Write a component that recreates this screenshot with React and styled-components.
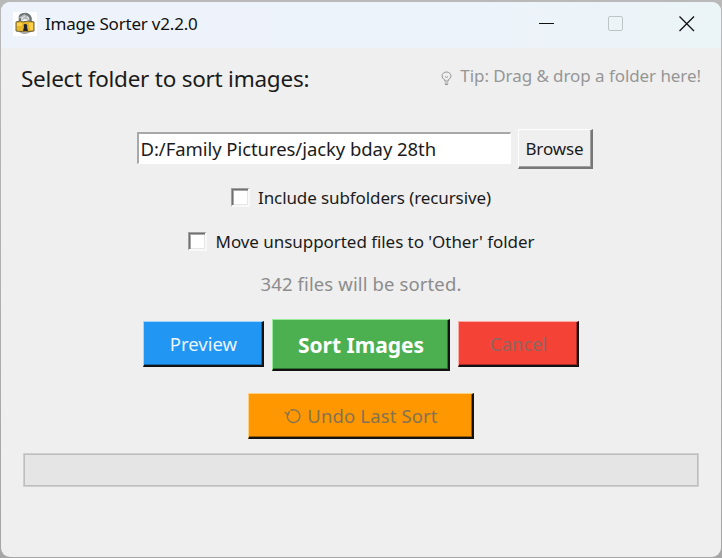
import React from "react";
import styled, { createGlobalStyle } from "styled-components";

const GlobalStyle = createGlobalStyle`
  * { box-sizing: border-box; }
  body { margin: 0; overflow: hidden; background: #b3b3b3; }
  button, input { font-family: inherit; margin: 0; border-radius: 0; outline: 0; }
`;

const Desktop = styled.div`
  width: 722px;
  height: 558px;
  padding: 2px 1px 1px;
  background: linear-gradient(#b9b9b9, #a5a5a5);
  font-family: "Noto Sans", "Open Sans", sans-serif;
`;

const AppWindow = styled.main`
  height: 555px;
  border-radius: 9px;
  overflow: hidden;
  background: #efefef;
  color: #1b1b1b;
`;

const TitleBar = styled.header`
  height: 46px;
  display: flex;
  align-items: center;
  padding: 0 26px 3px 12px;
  background: linear-gradient(90deg, #eef3fb 0%, #edf3fa 65%, #ebf4f7 100%);
`;

const Label = styled.span`
  display: block;
  white-space: pre;
  line-height: ${(p) => p.$line || 24}px;
  font-size: ${(p) => p.$size}px;
  letter-spacing: ${(p) => p.$track || 0}px;
  font-weight: ${(p) => p.$weight || 400};
  color: ${(p) => p.$color || "#1b1b1b"};
`;

const Title = styled(Label)`
  margin-left: 8px;
  flex: 1;
`;

const WindowControls = styled.div`
  display: grid;
  grid-template-columns: 69px 71px 16px;
  svg { display: block; }
`;

const Body = styled.section`
  display: flex;
  flex-direction: column;
  align-items: center;
`;

const Heading = styled.div`
  width: 100%;
  height: 81px;
  padding: 15px 20px 0 20px;
  display: flex;
  justify-content: space-between;
  align-items: flex-start;
`;

const Tip = styled.div`
  display: flex;
  padding-top: 1px;
  gap: 8px;
  svg { margin-top: 7px; }
`;

const FolderRow = styled.div`
  height: 40px;
  margin-left: 7px;
  display: flex;
  gap: 7px;
`;

const InputCell = styled.div`
  padding-top: 3px;
`;

const PathInput = styled.input`
  display: block;
  width: 374px;
  height: 32px;
  padding: 0 0 1px 2px;
  background: #fff;
  border: solid;
  border-width: 2px 1px 1px 2px;
  border-color: #a8a8a8 #fff #fff #a8a8a8;
  color: #1b1b1b;
  font-size: ${(p) => p.$size}px;
  letter-spacing: ${(p) => p.$track}px;
`;

const BrowseButton = styled.button`
  width: 75px;
  height: 40px;
  padding: 1px 0 0;
  display: flex;
  align-items: center;
  justify-content: center;
  background: #efefef;
  border: solid;
  border-width: 1px 2px 2px 1px;
  border-color: #fff #777 #777 #fff;
  box-shadow: inset -1px -1px #a0a0a0;
`;

const CheckRow = styled.label`
  height: 24px;
  margin-top: ${(p) => p.$top}px;
  display: flex;
  gap: ${(p) => p.$gap}px;
`;

const CheckBox = styled.input`
  appearance: none;
  width: 19px;
  height: 19px;
  margin-top: 2px;
  background: #fff;
  border: solid;
  border-width: 1px 2px 2px 1px;
  border-color: #a0a0a0 #f8f8f8 #f8f8f8 #a0a0a0;
  box-shadow: inset 1px 1px #707070, inset 2px 2px #aaa, inset -1px -1px #e6e6e6;
`;

const Status = styled.div`
  margin-top: 18px;
`;

const Actions = styled.div`
  height: 53px;
  margin-top: 23px;
  display: flex;
  align-items: flex-start;
  gap: 8px;
`;

const tones = {
  blue: ["#2196f3", "#a5d5fa", "#1769aa"],
  green: ["#4caf50", "#96ec9a", "#2d7431"],
  red: ["#f44336", "#ffaaa4", "#a02c24"],
  orange: ["#ff9800", "#ffd080", "#9c5f04"],
};

const ActionButton = styled.button`
  width: ${(p) => p.$width}px;
  height: ${(p) => p.$height}px;
  margin-top: ${(p) => p.$top || 0}px;
  padding: 1px 0 0 1px;
  display: flex;
  align-items: center;
  justify-content: center;
  gap: 5px;
  background: ${(p) => tones[p.$tone][0]};
  border: solid;
  border-width: 1px 2px 2px 1px;
  border-color: ${(p) => tones[p.$tone][1]} #121212 #121212 ${(p) => tones[p.$tone][1]};
  box-shadow: inset -1px -1px ${(p) => tones[p.$tone][2]};
`;

const UndoRow = styled.div`
  margin-top: 21px;
`;

const Progress = styled.div`
  width: 676px;
  height: 34px;
  margin-top: 14px;
  border: 1px solid #cfcfcf;
  box-shadow: inset 0 0 0 1px #bebebe;
  background: #e5e5e5;
`;

const AppIcon = () => (
  <svg width="24" height="24" viewBox="0 0 24 24">
    <rect width="24" height="24" fill="#fff" />
    <path d="M7 9V4.500q1-2.500 4-2.300 5-.5 6.500 4v4" fill="none" stroke="#70777a" strokeWidth="2.600" />
    <path d="M6.500 6q4-3 7 1.500M11 2.500l5 6M9 8l5-4" fill="none" stroke="#b5bbbd" strokeWidth="1.500" />
    <path d="M3 10q5-2 7 0 5-2 11 0v9q-8 2-18 0z" fill="#e8b529" stroke="#656042" strokeWidth="1" />
    <path d="M4 11h5v3H4zM16 11h4v7h-3z" fill="#ffd14b" />
    <path d="M12 12q3 0 2 3l1 4h-5l1-4q-1-3 1-3z" fill="#22262a" />
    <path d="M6 20h12l-5 2h-3z" fill="#aaa" />
  </svg>
);

const Bulb = () => (
  <svg width="11" height="15" viewBox="0 0 11 15" fill="none" stroke="#969696">
    <path d="M3.700 10V8.700Q1 7.500 1 5a4.500 4 0 0 1 9 0Q10 7.500 7.300 8.700V10zM3.700 12h3.600M4 13.500h3M4 5.500l1.500 1L7 5.500" />
  </svg>
);

const UndoIcon = () => (
  <svg width="18" height="18" viewBox="0 0 18 18" fill="none" stroke="#857252" strokeWidth="1.4">
    <path d="M6.500 3.300Q9 2.300 11.500 3.200A6.300 6.300 0 1 1 3.500 7.500M.8 5l3.200 2.800L5.500 4" />
  </svg>
);

export default function App() {
  return (
    <>
      <GlobalStyle />
      <Desktop>
        <AppWindow>
          <TitleBar>
            <AppIcon />
            <Title $size={17} $track={-0.2} $color="#111">Image Sorter v2.2.0</Title>
            <WindowControls>
              <svg width="16" height="16"><path d="M0 7.500h15" stroke="#111" /></svg>
              <svg width="16" height="16"><rect x=".5" y=".5" width="14" height="14" rx="1.5" fill="none" stroke="#bfc4c7" /></svg>
              <svg width="16" height="16"><path d="M.5 .5l14.500 14.500M15 .5L.5 15" stroke="#111" strokeWidth="1.3" /></svg>
            </WindowControls>
          </TitleBar>
          <Body>
            <Heading>
              <Label $size={22.5} $track={-0.24} $line={32}>Select folder to sort images:</Label>
              <Tip>
                <Bulb />
                <Label $size={17} $track={-0.07} $color="#969696">Tip: Drag &amp; drop a folder here!</Label>
              </Tip>
            </Heading>
            <FolderRow>
              <InputCell>
                <PathInput $size={18.5} $track={-0.06} defaultValue="D:/Family Pictures/jacky bday 28th" />
              </InputCell>
              <BrowseButton><Label $size={17} $track={-0.1}>Browse</Label></BrowseButton>
            </FolderRow>
            <CheckRow $top={17} $gap={8}>
              <CheckBox type="checkbox" />
              <Label $size={17} $track={-0.1}>Include subfolders (recursive)</Label>
            </CheckRow>
            <CheckRow $top={20} $gap={9}>
              <CheckBox type="checkbox" />
              <Label $size={17} $track={-0.05}>Move unsupported files to 'Other' folder</Label>
            </CheckRow>
            <Status><Label $size={18.5} $track={0.12} $color="#8c8c8c">342 files will be sorted.</Label></Status>
            <Actions>
              <ActionButton $tone="blue" $width={121} $height={46} $top={2}><Label $size={18.5} $color="#e9f5ff">Preview</Label></ActionButton>
              <ActionButton $tone="green" $width={178} $height={52}><Label $size={21} $weight={700} $color="#fff">Sort Images</Label></ActionButton>
              <ActionButton $tone="red" $width={121} $height={46} $top={2}><Label $size={18.5} $color="#8f6660">Cancel</Label></ActionButton>
            </Actions>
            <UndoRow>
              <ActionButton $tone="orange" $width={226} $height={46}><UndoIcon /><Label $size={18.5} $track={0.14} $color="#857252">Undo Last Sort</Label></ActionButton>
            </UndoRow>
            <Progress />
          </Body>
        </AppWindow>
      </Desktop>
    </>
  );
}
